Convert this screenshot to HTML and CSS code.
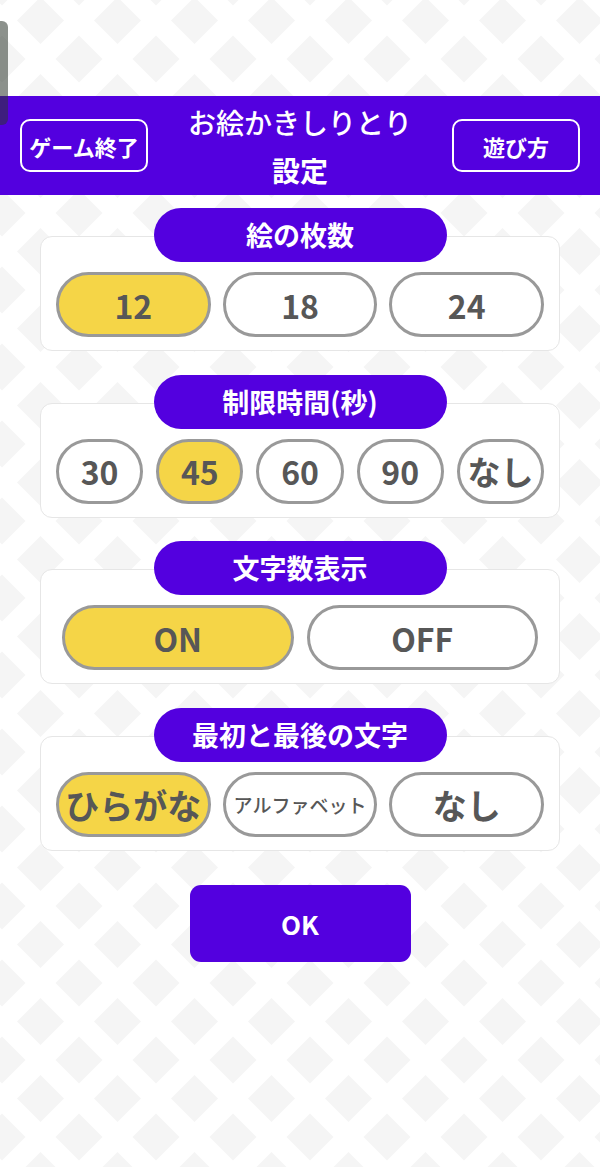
FILE: index.html
```html
<!DOCTYPE html>
<html lang="ja">
<head>
    <meta charset="UTF-8">
    <meta name="viewport" content="width=device-width, initial-scale=1.0">
    <title>お絵かきしりとり 設定</title>
    <link rel="stylesheet" href="styles.css">
</head>
<body>

<div class="edge-tab"></div>

<header class="header">
    <button class="header-btn">ゲーム終了</button>
    <div class="title">
        <div class="title-main">お絵かきしりとり</div>
        <div class="title-sub">設定</div>
    </div>
    <button class="header-btn">遊び方</button>
</header>

<main class="settings">
    <section class="setting">
        <div class="setting-label">絵の枚数</div>
        <div class="setting-card">
            <div class="options">
                <button class="option selected">12</button>
                <button class="option">18</button>
                <button class="option">24</button>
            </div>
        </div>
    </section>

    <section class="setting">
        <div class="setting-label">制限時間(秒)</div>
        <div class="setting-card">
            <div class="options tight">
                <button class="option">30</button>
                <button class="option selected">45</button>
                <button class="option">60</button>
                <button class="option">90</button>
                <button class="option kana">なし</button>
            </div>
        </div>
    </section>

    <section class="setting">
        <div class="setting-label">文字数表示</div>
        <div class="setting-card">
            <div class="options inset">
                <button class="option selected">ON</button>
                <button class="option">OFF</button>
            </div>
        </div>
    </section>

    <section class="setting">
        <div class="setting-label">最初と最後の文字</div>
        <div class="setting-card">
            <div class="options">
                <button class="option selected kana wide">ひらがな</button>
                <button class="option small">アルファベット</button>
                <button class="option kana wide">なし</button>
            </div>
        </div>
    </section>

    <button class="ok-btn">OK</button>
</main>

</body>
</html>
```

FILE: styles.css
```css
html {
    background-color: #ffffff;
    background-image: url("data:image/svg+xml,%3Csvg xmlns='http://www.w3.org/2000/svg' width='77' height='77'%3E%3Cg fill='%23f5f5f5'%3E%3Cpath d='M38.5 15L62 38.5L38.5 62L15 38.5Z'/%3E%3Cpath d='M0 -23.5L23.5 0L0 23.5L-23.5 0Z'/%3E%3Cpath d='M77 -23.5L100.5 0L77 23.5L53.5 0Z'/%3E%3Cpath d='M0 53.5L23.5 77L0 100.5L-23.5 77Z'/%3E%3Cpath d='M77 53.5L100.5 77L77 100.5L53.5 77Z'/%3E%3C/g%3E%3C/svg%3E");
    background-size: 77px 77px;
    background-position: 1.5px -18.5px;
}

body {
    margin: 0;
    min-height: 100vh;
    font-family: "Noto Sans CJK JP", "Noto Sans", sans-serif;
    color: #575757;
}

button {
    font-family: inherit;
    cursor: pointer;
}

.edge-tab {
    position: fixed;
    left: 0;
    top: 21px;
    width: 8px;
    height: 104px;
    border-radius: 0 6px 6px 0;
    background: rgba(45, 55, 45, 0.55);
    z-index: 10;
}

.header {
    margin-top: 96px;
    height: 99px;
    padding: 0 20px;
    background: #5300df;
    display: flex;
    align-items: center;
    justify-content: space-between;
}

.header-btn {
    width: 128px;
    height: 53px;
    padding: 0;
    background: transparent;
    border: 2.5px solid #ffffff;
    border-radius: 10px;
    color: #ffffff;
    font-size: 22px;
    font-weight: bold;
}

.title {
    text-align: center;
    color: #ffffff;
    font-size: 28px;
    line-height: 48px;
}

.title-main {
    font-weight: 500;
}

.title-sub {
    font-weight: bold;
}

.settings {
    padding: 13px 40px 0;
    display: flex;
    flex-direction: column;
    gap: 23.7px;
}

.setting {
    display: flex;
    flex-direction: column;
    align-items: center;
}

.setting-label {
    position: relative;
    z-index: 1;
    width: 293px;
    height: 54px;
    margin-bottom: -26px;
    border-radius: 27px;
    background: #5300df;
    color: #ffffff;
    font-size: 27px;
    font-weight: bold;
    line-height: 54px;
    text-align: center;
}

.setting-card {
    align-self: stretch;
    padding: 35px 15px 13px;
    background: #ffffff;
    border: 1px solid #e6e6e6;
    border-radius: 12px;
}

.options {
    display: flex;
    gap: 12px;
}

.options.tight {
    gap: 13px;
}

.options.inset {
    gap: 13px;
    padding: 0 6px;
}

.option {
    flex: 1;
    height: 65px;
    padding: 0;
    background: #ffffff;
    border: 3px solid #999999;
    border-radius: 999px;
    color: #575757;
    font-size: 32px;
    font-weight: bold;
    white-space: nowrap;
}

.option.selected {
    background: #f5d547;
}

.option.kana {
    font-size: 33px;
}

.option.kana.wide {
    font-size: 34px;
}

.option.small {
    font-size: 19px;
    font-weight: 500;
}

.ok-btn {
    align-self: center;
    width: 221px;
    height: 77px;
    margin-top: 10px;
    background: #5300df;
    border: none;
    border-radius: 11px;
    color: #ffffff;
    font-size: 26px;
    font-weight: bold;
}
```
